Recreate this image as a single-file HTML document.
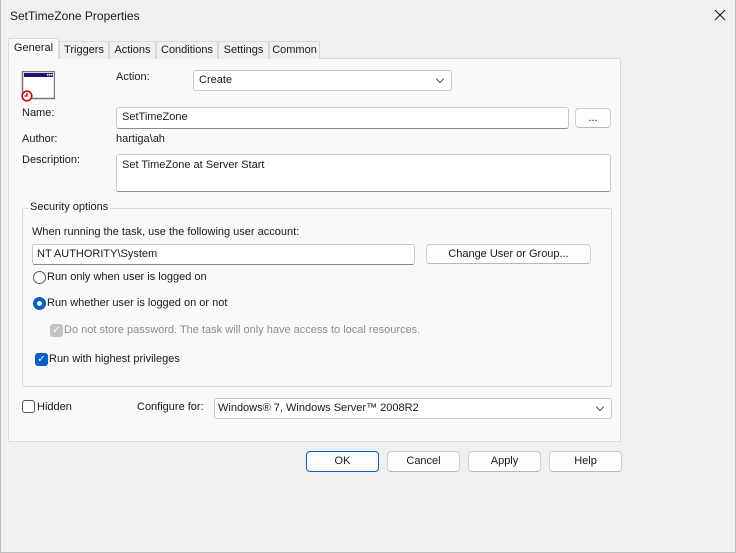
<!DOCTYPE html>
<html><head><style>
*{box-sizing:border-box;margin:0;padding:0}
body{width:736px;height:553px;background:#f0f0f0;font-family:"Liberation Sans",sans-serif;font-size:11px;color:#1a1a1a;position:relative;overflow:hidden}
.a{position:absolute;white-space:nowrap}
.tab{position:absolute;top:41px;height:18px;border:1px solid #d9d9d9;border-bottom:none;background:#f0f0f0;text-align:center;line-height:16px}
.box{position:absolute;background:#fff;border:1px solid #c8c8c8;border-bottom-color:#8a8a8a;border-radius:3px;padding-left:5px;line-height:18px}
.btn{position:absolute;background:#fdfdfd;border:1px solid #d0d0d0;border-bottom-color:#b8b8b8;border-radius:4px;text-align:center;line-height:18px}
.chev{position:absolute;right:8px;top:5px;width:6px;height:6px;border-right:1px solid #555;border-bottom:1px solid #555;transform:rotate(45deg)}
.radio{position:absolute;width:13px;height:13px;border-radius:50%}
.cb{position:absolute;width:13px;height:13px;border-radius:3px}
</style></head><body>
<div class="a" style="left:0;top:0;width:736px;height:553px;border:1px solid #bdbdbd;border-top:none"></div>
<div class="a" style="left:10px;top:9px;font-size:12px">SetTimeZone Properties</div>
<svg class="a" style="left:714px;top:9px" width="12" height="12"><path d="M1 1L11 11M11 1L1 11" stroke="#222" stroke-width="1.2"/></svg>

<div class="a" style="left:8px;top:58px;width:613px;height:384px;background:#f9f9f9;border:1px solid #dcdcdc"></div>
<div class="tab" style="left:8px;top:38px;width:51px;height:21px;background:#f9f9f9;line-height:19px;z-index:2">General</div>
<div class="tab" style="left:59px;width:50px">Triggers</div>
<div class="tab" style="left:109px;width:47px">Actions</div>
<div class="tab" style="left:156px;width:62px">Conditions</div>
<div class="tab" style="left:218px;width:51px">Settings</div>
<div class="tab" style="left:269px;width:51px">Common</div>

<svg class="a" style="left:21px;top:71px" width="34" height="32" viewBox="0 0 34 32">
<rect x="1.5" y="0.5" width="32" height="27" fill="#fff" stroke="#777" stroke-width="1.5"/>
<rect x="3" y="2" width="29" height="4" fill="#2a1070"/>
<rect x="26" y="3" width="1.5" height="1.5" fill="#fff"/><rect x="28" y="3" width="1.5" height="1.5" fill="#fff"/><rect x="30" y="3" width="1.5" height="1.5" fill="#fff"/>
<circle cx="6" cy="25" r="4.8" fill="#fff" stroke="#d00" stroke-width="1.6"/>
<path d="M6 22V25H3.5" stroke="#000" fill="none"/>
</svg>

<div class="a" style="left:116px;top:71px">Action:</div>
<div class="box" style="left:193px;top:70px;width:259px;height:21px;border-bottom-color:#c8c8c8">Create<div class="chev"></div></div>
<div class="a" style="left:22px;top:107px">Name:</div>
<div class="box" style="left:116px;top:107px;width:453px;height:22px">SetTimeZone</div>
<div class="btn" style="left:575px;top:108px;width:36px;height:20px">...</div>
<div class="a" style="left:22px;top:133px">Author:</div>
<div class="a" style="left:116px;top:133px">hartiga\ah</div>
<div class="a" style="left:22px;top:154px">Description:</div>
<div class="box" style="left:116px;top:154px;width:495px;height:38px;line-height:18px;padding-top:1px">Set TimeZone at Server Start</div>

<div class="a" style="left:22px;top:208px;width:590px;height:179px;border:1px solid #dcdcdc;border-radius:2px"></div>
<div class="a" style="left:28px;top:201px;background:#f9f9f9;padding:0 2px">Security options</div>
<div class="a" style="left:32px;top:226px">When running the task, use the following user account:</div>
<div class="box" style="left:32px;top:244px;width:383px;height:21px;padding-left:4px">NT AUTHORITY\System</div>
<div class="btn" style="left:426px;top:244px;width:165px;height:20px">Change User or Group...</div>
<div class="radio" style="left:33px;top:271px;border:1px solid #555;background:#fff"></div>
<div class="a" style="left:47px;top:271px">Run only when user is logged on</div>
<div class="radio" style="left:33px;top:297px;background:#0a5fc0"><div style="position:absolute;left:4px;top:4px;width:5px;height:5px;border-radius:50%;background:#fff"></div></div>
<div class="a" style="left:47px;top:297px">Run whether user is logged on or not</div>
<div class="cb" style="left:50px;top:324px;background:#c4c4c4;color:#fff;font-size:10px;line-height:13px;text-align:center">✓</div>
<div class="a" style="left:64px;top:324px;color:#8c8c8c">Do not store password. The task will only have access to local resources.</div>
<div class="cb" style="left:35px;top:353px;background:#0a5fc0;color:#fff;font-size:10px;line-height:13px;text-align:center">✓</div>
<div class="a" style="left:49px;top:353px">Run with highest privileges</div>

<div class="cb" style="left:22px;top:400px;border:1px solid #555;background:#fff"></div>
<div class="a" style="left:37px;top:401px">Hidden</div>
<div class="a" style="left:137px;top:401px">Configure for:</div>
<div class="box" style="left:214px;top:398px;width:398px;height:21px;border-bottom-color:#c8c8c8;padding-left:3px">Windows® 7, Windows Server™ 2008R2<div class="chev"></div></div>

<div class="btn" style="left:306px;top:451px;width:73px;height:21px;border:1px solid #0a5fc0">OK</div>
<div class="btn" style="left:387px;top:451px;width:73px;height:21px">Cancel</div>
<div class="btn" style="left:468px;top:451px;width:73px;height:21px">Apply</div>
<div class="btn" style="left:549px;top:451px;width:73px;height:21px">Help</div>
</body></html>
